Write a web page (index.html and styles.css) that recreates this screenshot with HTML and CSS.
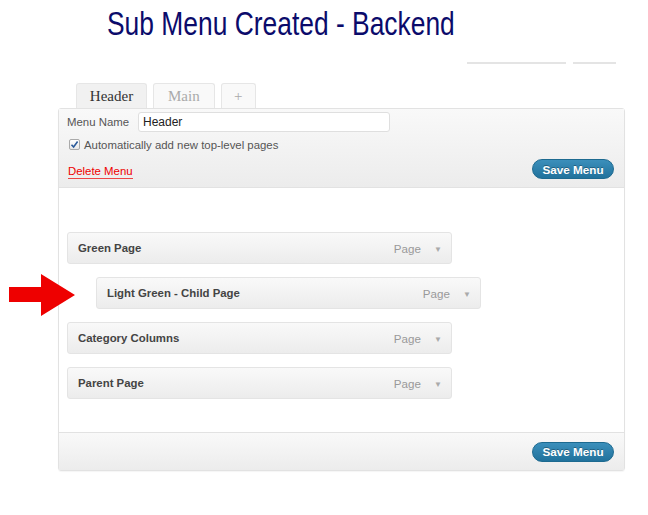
FILE: index.html
```html
<!DOCTYPE html>
<html lang="en">
<head>
  <meta charset="UTF-8">
  <title>Sub Menu Created - Backend</title>
  <link rel="stylesheet" href="styles.css">
</head>
<body>
  <div class="page">
    <h1 class="title"><span>Sub Menu Created - Backend</span></h1>

    <div class="top-lines">
      <div class="line wide"></div>
      <div class="line short"></div>
    </div>

    <div class="tabs">
      <div class="tab active">Header</div>
      <div class="tab">Main</div>
      <div class="tab plus">+</div>
    </div>

    <div class="menu-panel">
      <div class="menu-head">
        <div class="name-row">
          <label>Menu Name</label>
          <div class="name-input">Header</div>
        </div>
        <div class="auto-row">
          <span class="checkbox">
            <svg width="9" height="9" viewBox="0 0 9 9"><path d="M1.5 4.8 L3.6 7 L7.6 1.6" fill="none" stroke="#2a5a9a" stroke-width="1.6"/></svg>
          </span>
          Automatically add new top-level pages
        </div>
        <div class="action-row">
          <a class="delete">Delete Menu</a>
          <button class="save">Save Menu</button>
        </div>
      </div>

      <div class="menu-body">
        <div class="item">
          <span class="item-title">Green Page</span>
          <span class="item-type">Page <i>&#9660;</i></span>
        </div>
        <div class="item child">
          <span class="item-title">Light Green - Child Page</span>
          <span class="item-type">Page <i>&#9660;</i></span>
        </div>
        <div class="item">
          <span class="item-title">Category Columns</span>
          <span class="item-type">Page <i>&#9660;</i></span>
        </div>
        <div class="item">
          <span class="item-title">Parent Page</span>
          <span class="item-type">Page <i>&#9660;</i></span>
        </div>
      </div>

      <div class="menu-foot">
        <button class="save">Save Menu</button>
      </div>
    </div>

    <!-- red arrow pointing at the child item -->
    <svg class="pointer" width="80" height="50" viewBox="0 0 80 50">
      <polygon points="9,14 41,14 41,1 75,22 41,43 41,29 9,29" fill="#ee0000"/>
    </svg>
  </div>
</body>
</html>
```

FILE: styles.css
```css
* {
  box-sizing: border-box;
}

body {
  margin: 0;
  background: #fff;
  font-family: 'Liberation Sans', Arial, sans-serif;
  color: #333;
}

.page {
  position: relative;
  width: 648px;
  height: 515px;
}

.title {
  margin: 0;
  padding: 5px 0 0 107px;
  height: 43px;
  font-size: 33px;
  line-height: 38px;
  font-weight: normal;
  color: #0b0b6b;
}

.title span {
  display: inline-block;
  transform: scaleX(0.8);
  transform-origin: left center;
  white-space: nowrap;
}

.top-lines {
  display: flex;
  gap: 7px;
  margin: 19px 0 0 467px;
}

.line {
  height: 2px;
  background: #e4e4e4;
}

.line.wide {
  width: 99px;
}

.line.short {
  width: 43px;
}

.tabs {
  display: flex;
  gap: 6px;
  margin: 19px 0 0 76px;
  height: 25px;
}

.tab {
  height: 25px;
  padding: 0 14px;
  border: 1px solid #e6e6e6;
  border-bottom: none;
  border-radius: 3px 3px 0 0;
  background: #f9f9f9;
  font-family: 'Liberation Serif', 'Times New Roman', serif;
  font-size: 15px;
  line-height: 24px;
  color: #aaa;
}

.tab.active {
  width: 71px;
  text-align: center;
  padding: 0;
  background: #f1f1f1;
  color: #333;
}

.tab.plus {
  width: 35px;
  padding: 0;
  text-align: center;
}

.menu-panel {
  width: 567px;
  margin-left: 58px;
  border: 1px solid #e2e2e2;
  border-radius: 3px;
  box-shadow: 0 1px 1px rgba(0, 0, 0, 0.04);
}

.menu-head {
  height: 79px;
  padding: 3px 10px 0 8px;
  background: linear-gradient(#f9f9f9, #ececec);
  border-bottom: 1px solid #e2e2e2;
  font-size: 11.4px;
}

.name-row {
  display: flex;
  align-items: center;
  height: 20px;
}

.name-row label {
  width: 71px;
  color: #555;
}

.name-input {
  width: 252px;
  height: 20px;
  padding-left: 4px;
  border: 1px solid #dfdfdf;
  border-radius: 3px;
  background: #fff;
  font-size: 12px;
  line-height: 18px;
  color: #222;
}

.auto-row {
  display: flex;
  align-items: center;
  gap: 4px;
  margin-top: 7px;
  height: 11px;
  color: #555;
}

.checkbox {
  display: flex;
  align-items: center;
  justify-content: center;
  width: 11px;
  height: 11px;
  margin-left: 2px;
  border: 1px solid #aaa;
  border-radius: 2px;
  background: linear-gradient(#fff, #e8e8e8);
}

.action-row {
  display: flex;
  justify-content: space-between;
  align-items: center;
  margin-top: 9px;
  height: 20px;
}

.delete {
  margin-left: 1px;
  margin-top: 5px;
  padding-bottom: 1px;
  border-bottom: 1px solid #e44;
  color: #e00;
}

.save {
  width: 82px;
  height: 20px;
  padding: 0;
  border: 1px solid #1d6a90;
  border-radius: 10px;
  background: linear-gradient(#3b8fbb, #21729c);
  font-family: 'Liberation Sans', Arial, sans-serif;
  font-size: 11.7px;
  font-weight: bold;
  color: #fff;
  text-shadow: 0 -1px 0 rgba(0, 0, 0, 0.3);
}

.menu-body {
  height: 244px;
  padding: 44px 0 0 8px;
  background: #fff;
  display: flex;
  flex-direction: column;
  gap: 13px;
}

.item {
  display: flex;
  justify-content: space-between;
  align-items: center;
  width: 385px;
  height: 32px;
  padding: 0 9px 0 10px;
  border: 1px solid #e4e4e4;
  border-radius: 3px;
  background: linear-gradient(#f9f9f9, #ececec);
  font-size: 11.4px;
}

.item.child {
  margin-left: 29px;
}

.item-title {
  font-weight: bold;
  color: #444;
}

.item-type {
  color: #999;
  font-size: 11.6px;
}

.item-type i {
  font-style: normal;
  font-size: 8px;
  color: #aaa;
  margin-left: 10px;
  vertical-align: 1px;
}

.menu-foot {
  display: flex;
  justify-content: flex-end;
  align-items: center;
  height: 38px;
  padding-right: 10px;
  border-top: 1px solid #e2e2e2;
  background: linear-gradient(#f9f9f9, #ececec);
}

.pointer {
  position: absolute;
  left: 0;
  top: 273px;
}
```
